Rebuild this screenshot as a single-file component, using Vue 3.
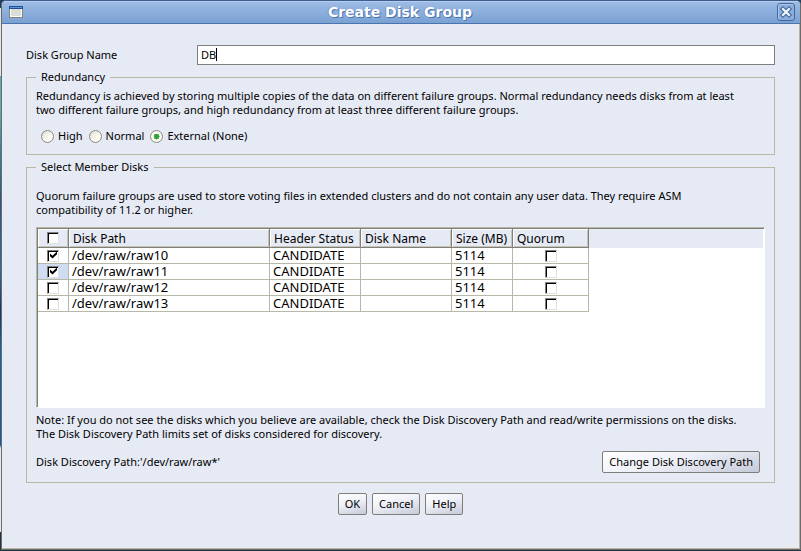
<script setup>
import { ref, computed } from 'vue'

const groupName = ref('DB')
const redundancy = ref('External (None)')
const levels = ['High', 'Normal', 'External (None)']
const discoveryPath = "'/dev/raw/raw*'"

const disks = ref([
  { path: '/dev/raw/raw10', status: 'CANDIDATE', name: '', size: 5114, selected: true, quorum: false, focused: false },
  { path: '/dev/raw/raw11', status: 'CANDIDATE', name: '', size: 5114, selected: true, quorum: false, focused: true },
  { path: '/dev/raw/raw12', status: 'CANDIDATE', name: '', size: 5114, selected: false, quorum: false, focused: false },
  { path: '/dev/raw/raw13', status: 'CANDIDATE', name: '', size: 5114, selected: false, quorum: false, focused: false }
])

const allSelected = computed({
  get: () => disks.value.every((d) => d.selected),
  set: (value) => disks.value.forEach((d) => (d.selected = value))
})
</script>

<template>
  <div class="desktop">
    <main class="dialog">
      <header class="titlebar">
        <svg class="window-icon" width="14" height="12" viewBox="0 0 14 12" aria-hidden="true">
          <rect width="14" height="12" fill="#85857c" />
          <rect x="1" y="1" width="12" height="10" fill="#fff" />
          <rect x="2" y="3" width="10" height="7" fill="#dcdfd8" />
          <rect width="14" height="3" fill="#1e4f94" />
          <rect x="1" y="1" width="12" height="1" fill="#5d92d4" />
        </svg>
        <h1>Create Disk Group</h1>
        <button class="close" type="button" aria-label="Close">
          <svg width="18" height="18" viewBox="0 0 18 18" aria-hidden="true">
            <rect x="0.5" y="0.5" width="17" height="17" rx="2.5" fill="#8aaedb" stroke="#41679c" />
            <path d="M1.5 16V2.5Q1.5 1.5 2.5 1.5H16" fill="none" stroke="#a9c4e8" />
            <path d="M6 6L12 12M12 6L6 12" stroke="#41679c" stroke-width="4.4" stroke-linecap="square" />
            <path d="M6 6L12 12M12 6L6 12" stroke="#f4f7fc" stroke-width="2.2" stroke-linecap="square" />
          </svg>
        </button>
      </header>

      <form class="content" @submit.prevent>
        <div class="name-row">
          <label for="group-name">Disk Group Name</label>
          <div class="field">
            <input id="group-name" v-model="groupName" type="text" />
            <span class="caret"></span>
          </div>
        </div>

        <fieldset class="redundancy">
          <legend>Redundancy</legend>
          <p>
            Redundancy is achieved by storing multiple copies of the data on different failure groups. Normal redundancy needs disks from at least<br />
            two different failure groups, and high redundancy from at least three different failure groups.
          </p>
          <div class="radios">
            <label v-for="level in levels" :key="level">
              <input v-model="redundancy" type="radio" name="redundancy" :value="level" />
              <span>{{ level }}</span>
            </label>
          </div>
        </fieldset>

        <fieldset class="members">
          <legend>Select Member Disks</legend>
          <p>
            Quorum failure groups are used to store voting files in extended clusters and do not contain any user data. They require ASM<br />
            compatibility of 11.2 or higher.
          </p>
          <div class="scrollpane">
            <div class="table-band">
              <table>
                <colgroup>
                  <col class="c-check" />
                  <col class="c-path" />
                  <col class="c-status" />
                  <col class="c-name" />
                  <col class="c-size" />
                  <col class="c-quorum" />
                </colgroup>
                <thead>
                  <tr>
                    <th class="tick"><input v-model="allSelected" type="checkbox" aria-label="Select all disks" /></th>
                    <th>Disk Path</th>
                    <th>Header Status</th>
                    <th>Disk Name</th>
                    <th>Size (MB)</th>
                    <th>Quorum</th>
                  </tr>
                </thead>
                <tbody>
                  <tr v-for="disk in disks" :key="disk.path">
                    <td class="tick" :class="{ focused: disk.focused }">
                      <input v-model="disk.selected" type="checkbox" :aria-label="'Select ' + disk.path" />
                    </td>
                    <td>{{ disk.path }}</td>
                    <td>{{ disk.status }}</td>
                    <td>{{ disk.name }}</td>
                    <td>{{ disk.size }}</td>
                    <td class="tick"><input v-model="disk.quorum" type="checkbox" :aria-label="'Quorum ' + disk.path" /></td>
                  </tr>
                </tbody>
              </table>
            </div>
          </div>
          <p>
            Note: If you do not see the disks which you believe are available, check the Disk Discovery Path and read/write permissions on the disks.<br />
            The Disk Discovery Path limits set of disks considered for discovery.
          </p>
          <div class="path-row">
            <span>Disk Discovery Path:{{ discoveryPath }}</span>
            <button class="btn" type="button">Change Disk Discovery Path</button>
          </div>
        </fieldset>

        <div class="actions">
          <button class="btn" type="submit">OK</button>
          <button class="btn" type="button">Cancel</button>
          <button class="btn" type="button">Help</button>
        </div>
      </form>
    </main>
  </div>
</template>

<style>
body {
  margin: 0;
}
</style>

<style scoped>
* {
  box-sizing: border-box;
}

.desktop {
  display: flex;
  min-height: 100vh;
  padding: 0 0 1px 1px;
  background: linear-gradient(#1f3f5c 0 8px, #e4e4e4 8px 76px, #4fb0bc 76px 110px, #2a8aa6 150px, #235a8c 200px, #2a6aa8 270px, #0a3a70 310px, #0a6ab0 350px, #0a5ca8 445px, #e6eaf4 448px 532px, #1c3848 532px);
  font-family: 'Noto Sans', sans-serif;
  font-size: 11px;
  line-height: 14px;
  color: #000;
}

.dialog {
  display: flex;
  flex-direction: column;
  flex: 1;
  min-width: 0;
  background: #e6eaf5;
  border: 1px solid #6b6b6b;
  border-top-color: #3f5d8a;
  border-radius: 5px 5px 0 0;
  box-shadow: inset -1px -1px #b5b2ac, inset 1px -2px #efebe7, inset -2px 0 #efebe7;
}

.titlebar {
  display: flex;
  align-items: center;
  height: 23px;
  padding: 0 5px 0 7px;
  background: linear-gradient(#b4cdf0 0 1px, #9dbbe5 1px, #7aa1d3);
  border-bottom: 1px solid #4a74ae;
  border-radius: 4px 4px 0 0;
}

.window-icon {
  display: block;
}

h1 {
  flex: 1;
  margin: 0;
  font: bold 14px/20px 'DejaVu Sans', sans-serif;
  text-align: center;
  color: #fff;
  text-shadow: 1px 1px #4a74ae, -1px 0 #6c93c8;
}

.close {
  padding: 0;
  border: 0;
  background: none;
}

.close svg {
  display: block;
}

.content {
  display: flex;
  flex-direction: column;
  padding: 21px 25px 32px 24px;
}

.name-row {
  display: flex;
  align-items: center;
}

.name-row label {
  flex: 0 0 171px;
}

.field {
  position: relative;
  flex: 1;
}

.field input {
  display: block;
  width: 100%;
  height: 20px;
  padding: 0 3px 1px;
  border: 1px solid #7f7f7f;
  border-radius: 0;
  background: #fff;
  font: inherit;
  color: inherit;
  outline: 0;
}

.caret {
  position: absolute;
  top: 3px;
  left: 19px;
  width: 1px;
  height: 13px;
  background: #000;
}

fieldset {
  min-width: 0;
  margin: 0;
  border: 1px solid #b8b8a8;
}

legend {
  margin: 0;
  padding: 0 5px;
}

p {
  margin: 0;
  white-space: nowrap;
}

.redundancy {
  margin-top: 5px;
  padding: 5px 9px 11px;
}

.radios {
  display: flex;
  gap: 6px;
  padding: 12px 0 0 5px;
}

.radios label {
  display: flex;
  align-items: center;
  gap: 4px;
}

.radios input {
  appearance: none;
  width: 13px;
  height: 13px;
  margin: 0;
  border: 1px solid #8a8a82;
  border-radius: 50%;
  background: linear-gradient(135deg, #dedccf, #fbfaf2 60%);
}

.radios input:checked {
  background: radial-gradient(circle, #2fa13a 0 2px, #7fcb80 3px, #fbfaf2 3px);
}

.members {
  margin-top: 5px;
  padding: 15px 9px 9px;
}

.scrollpane {
  height: 181px;
  margin: 10px 0 5px;
  border: 1px solid #fff;
  border-top-color: #b8b8a8;
  border-left-color: #b8b8a8;
  background: #fff;
  box-shadow: inset 1px 1px #7f7f76;
  padding: 1px 1px 0 1px;
}

.table-band {
  background: linear-gradient(#e6eaf5 0 19px, #fff 19px);
}

table {
  table-layout: fixed;
  width: 551px;
  border-spacing: 0;
  font-size: 12px;
  line-height: 15px;
}

.c-check { width: 31px; }
.c-path { width: 201px; }
.c-status { width: 91px; }
.c-name { width: 91px; }
.c-size { width: 61px; }
.c-quorum { width: 76px; }

th,
td {
  padding: 0 0 0 4px;
  text-align: left;
  font-weight: normal;
  white-space: nowrap;
}

th {
  height: 19px;
  background: #e6eaf5;
  border-right: 1px solid #7f7f76;
  border-bottom: 1px solid #7f7f76;
  box-shadow: inset 1px 1px #fff, inset -1px -1px #c4c4b8;
}

td {
  height: 16px;
  padding-left: 3px;
  border-right: 1px solid #b8b8a8;
  border-bottom: 1px solid #b8b8a8;
  font-size: 13px;
}

.tick {
  padding: 0;
  text-align: center;
}

.focused {
  background: #cfdcf2;
}

.tick input {
  appearance: none;
  display: block;
  width: 12px;
  height: 12px;
  margin: 0 auto;
  padding: 1px;
  background: #fff;
  border: 1px solid #808080;
  border-right-color: #e0e0e0;
  border-bottom-color: #e0e0e0;
  box-shadow: inset 1px 1px #000;
}

.tick input:checked::before {
  content: '';
  display: block;
  width: 7px;
  height: 7px;
  margin: 0 0 0 1px;
  background: #000;
  clip-path: polygon(0 28%, 36% 62%, 100% 0, 100% 40%, 36% 100%, 0 68%);
}

.path-row {
  display: flex;
  align-items: center;
  justify-content: space-between;
  padding: 10px 5px 0 0;
}

.btn {
  height: 22px;
  padding: 0 6px;
  border: 1px solid #7f7f7a;
  border-radius: 2px;
  background: linear-gradient(165deg, #fff, #eef0f7 45%, #c6cad8);
  font: inherit;
  color: inherit;
}

.actions {
  display: flex;
  justify-content: center;
  gap: 5px;
  margin-top: 10px;
}
</style>
